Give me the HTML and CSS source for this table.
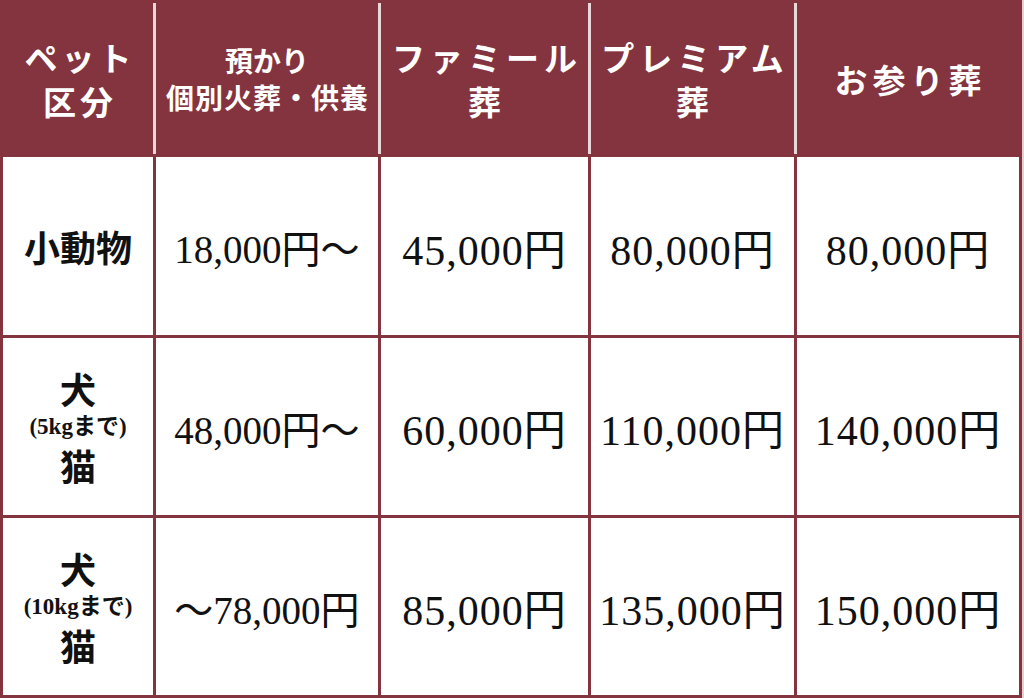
FILE: index.html
```html
<!DOCTYPE html>
<html lang="ja">
<head>
<meta charset="utf-8">
<title>料金表</title>
<link rel="stylesheet" href="styles.css">
</head>
<body>
<div class="price-table">
  <div class="cell head first"><span class="h-big">ペット</span><span class="h-big">区分</span></div>
  <div class="cell head"><span class="h-sm1">預かり</span><span class="h-sm2">個別火葬・供養</span></div>
  <div class="cell head"><span class="h-mid">ファミール</span><span class="h-mid">葬</span></div>
  <div class="cell head"><span class="h-mid">プレミアム</span><span class="h-mid">葬</span></div>
  <div class="cell head"><span class="h-mid">お参り葬</span></div>

  <div class="cell kind"><span class="k-big">小動物</span></div>
  <div class="cell price sub">18,000円～</div>
  <div class="cell price">45,000円</div>
  <div class="cell price">80,000円</div>
  <div class="cell price">80,000円</div>

  <div class="cell kind"><span class="k-big">犬</span><span class="k-sm">(5kgまで)</span><span class="k-big">猫</span></div>
  <div class="cell price sub">48,000円～</div>
  <div class="cell price">60,000円</div>
  <div class="cell price">110,000円</div>
  <div class="cell price">140,000円</div>

  <div class="cell kind"><span class="k-big">犬</span><span class="k-sm">(10kgまで)</span><span class="k-big">猫</span></div>
  <div class="cell price sub">～78,000円</div>
  <div class="cell price">85,000円</div>
  <div class="cell price">135,000円</div>
  <div class="cell price">150,000円</div>
</div>
</body>
</html>
```

FILE: styles.css
```css
html, body {
  margin: 0;
  padding: 0;
}
body {
  width: 1024px;
  height: 698px;
  background: #e8cdd1;
  overflow: hidden;
  font-family: "Liberation Serif", "Noto Sans CJK JP", serif;
}
.price-table {
  display: grid;
  grid-template-columns: 150px 222px 207px 203px 222px;
  grid-template-rows: 151px 178px 177px 177px;
  gap: 3px;
  padding: 3px;
  width: 1022px;
  height: 698px;
  box-sizing: border-box;
  background: #84343f;
}
.cell {
  display: flex;
  flex-direction: column;
  align-items: center;
  justify-content: center;
  text-align: center;
  white-space: nowrap;
}
.head {
  background: #84343f;
  color: #ffffff;
  font-family: "Noto Sans CJK JP", sans-serif;
  font-weight: 700;
}
.head:not(.first) {
  box-shadow: -3px 0 0 #e9d7da;
}
.h-big {
  font-size: 33px;
  line-height: 44px;
  letter-spacing: 4px;
  margin-right: -4px;
}
.h-sm1 {
  font-size: 28px;
  line-height: 37px;
}
.h-sm2 {
  font-size: 28px;
  line-height: 37px;
  letter-spacing: 1px;
  margin-right: -1px;
}
.h-mid {
  font-size: 33px;
  line-height: 44px;
  letter-spacing: 5px;
  margin-right: -5px;
}
.kind,
.price {
  background: #ffffff;
  color: #111111;
}
.kind {
  font-family: "Noto Sans CJK JP", sans-serif;
  font-weight: 700;
}
.k-big {
  font-size: 36px;
  line-height: 38px;
}
.k-sm {
  font-family: "Liberation Serif", "Noto Sans CJK JP", serif;
  font-size: 23px;
  line-height: 39px;
  font-weight: 700;
}
.price {
  font-size: 42px;
  letter-spacing: 1px;
  font-weight: 400;
}
.price.sub {
  font-size: 39px;
  letter-spacing: 0;
}
```
